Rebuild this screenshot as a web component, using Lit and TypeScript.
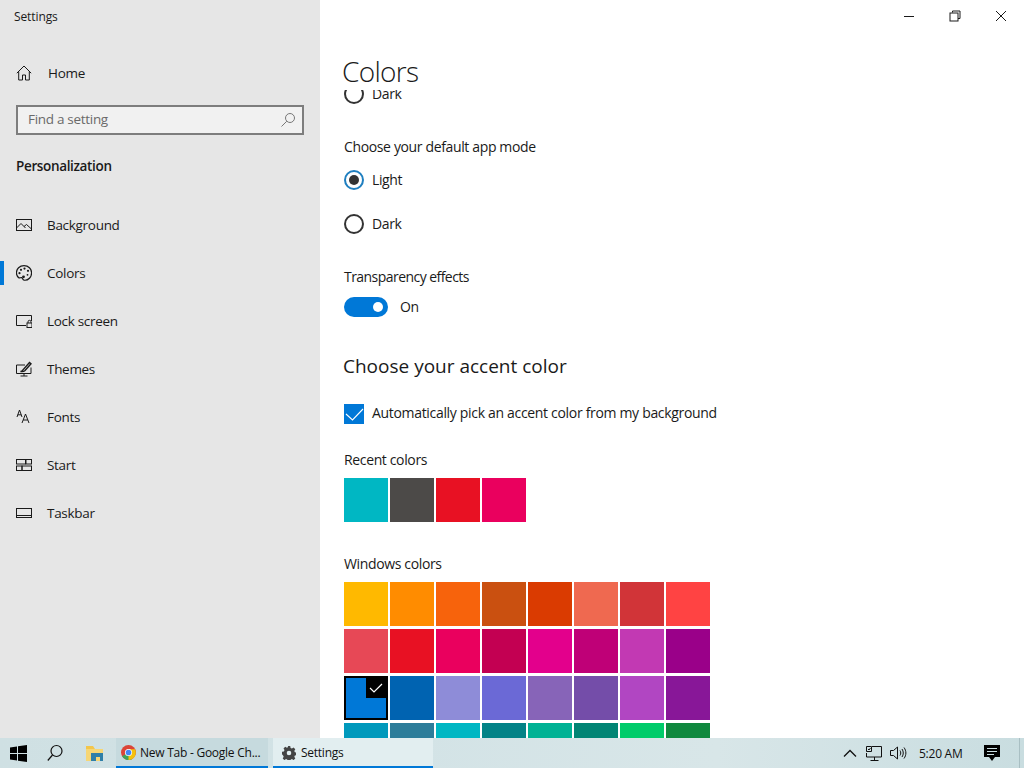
import { LitElement, html, css, svg } from "lit";
import { customElement } from "lit/decorators.js";

const navIcons: Record<string, unknown> = {
  background: svg`<rect x="0.5" y="2.5" width="15" height="11" /><path d="M0.5 11 5 6.500l4.500 4.500M8 9.500l2.500-2 5 4.500" />`,
  colors: svg`<path stroke-width="1.200" d="M8 .7C3.600.7.400 3.800.400 7.700c0 2 .8 3.800 2.300 5 .9.700 1.900-.4 3-.1 1.100.3.700 2.300 2.500 2.600 4.200.5 7.400-3.200 7.400-7.400C15.600 3.800 12.400.7 8 .7Z" /><circle cx="5" cy="4.800" r="1.100" class="f"/><circle cx="8.500" cy="3.600" r="1.100" class="f"/><circle cx="12" cy="5.800" r="1.100" class="f"/><circle cx="3.500" cy="8.200" r="1.100" class="f"/><circle cx="7.500" cy="11.800" r="1.400" class="f"/><circle cx="11.500" cy="9.800" r=".9" class="f"/>`,
  lock: svg`<path d="M10 12.500H.5v-10h15V8" /><rect x="11" y="10" width="5" height="4.500" /><path d="M12 10V8.800a1.500 1.500 0 0 1 3 0V10" />`,
  themes: svg`<path d="M15 6.500v6H.5V4H9M4.500 15h7M8 12.500V15" /><path stroke-width="1.400" d="M4.500 10.500c1.500-.2 2-.7 2.500-1.700L13.500 1.500 15 2.800 8.800 9.800c-1 .9-2.500 1-4.300.7Z" />`,
  fonts: svg`<path d="M1 8 3.500 1 6 8M1.800 5.800h3.400M6 14l3.500-9 3.500 9M7.200 11h4.600" />`,
  start: svg`<rect x="0.500" y="2.500" width="9" height="4.500" /><rect x="10" y="2.500" width="5.500" height="4.500" /><rect x="0.500" y="9" width="5.500" height="4.500" /><rect x="6" y="9" width="9.500" height="4.500" />`,
  taskbar: svg`<rect x="0.500" y="3.500" width="15" height="9" /><path d="M.5 10.500h15" />`,
};

const nav = [
  ["background", "Background"],
  ["colors", "Colors"],
  ["lock", "Lock screen"],
  ["themes", "Themes"],
  ["fonts", "Fonts"],
  ["start", "Start"],
  ["taskbar", "Taskbar"],
];

const recent = ["#00B7C3", "#4C4A48", "#E81123", "#EA005E"];
const windowsColors = [
  "#FFB900", "#FF8C00", "#F7630C", "#CA5010", "#DA3B01", "#EF6950", "#D13438", "#FF4343",
  "#E74856", "#E81123", "#EA005E", "#C30052", "#E3008C", "#BF0077", "#C239B3", "#9A0089",
  "#0078D7", "#0063B1", "#8E8CD8", "#6B69D6", "#8764B8", "#744DA9", "#B146C2", "#881798",
  "#0099BC", "#2D7D9A", "#00B7C3", "#038387", "#00B294", "#018574", "#00CC6A", "#10893E",
];

@customElement("app-root")
export class AppRoot extends LitElement {
  static styles = css`
    :host {
      display: block;
      width: 1024px;
      height: 768px;
      overflow: hidden;
      font-family: "Open Sans", "Noto Sans", sans-serif;
      font-size: 14px;
      letter-spacing: -0.36px;
      color: #1a1a1a;
      background: #fff;
    }
    .window { display: flex; height: 738px; }
    .side { width: 320px; flex: none; background: #e6e6e6; display: flex; flex-direction: column; font-size: 13.5px; letter-spacing: -0.3px; }
    .app-title { font-size: 12px; letter-spacing: -0.1px; line-height: 16px; padding: 9px 0 0 14px; height: 32px; box-sizing: border-box; }
    .row { display: flex; align-items: center; height: 48px; position: relative; }
    .home { margin-top: 17px; height: 48px; }
    .home span { margin-left: 1px; }
    .row .ic { width: 16px; height: 16px; margin-left: 16px; margin-right: 15px; flex: none; }
    .ic { fill: none; stroke: #1a1a1a; stroke-width: 1; }
    .ic .f { fill: #1a1a1a; stroke: none; }
    .search {
      margin: 8px 16px 0;
      height: 30px;
      box-sizing: border-box;
      border: 2px solid #7d7d7d;
      background: #f1f1f1;
      display: flex;
      align-items: center;
      justify-content: space-between;
      padding: 0 6px 0 10px;
      color: #6a6a6a;
    }
    .search span { padding-bottom: 3px; }
    .search svg { width: 16px; height: 16px; fill: none; stroke: #777; stroke-width: 1; }
    .section { margin: 20px 0 0 16px; font-weight: 600; line-height: 22px; height: 22px; letter-spacing: -0.35px; }
    .nav { margin-top: 24px; }
    .nav .row.on::before { content: ""; position: absolute; left: 0; top: 12px; width: 4px; height: 24px; background: #0078d7; }
    .main { flex: 1; min-width: 0; display: flex; flex-direction: column; }
    .titlebar { height: 32px; flex: none; display: flex; justify-content: flex-end; }
    .wb { width: 46px; height: 32px; display: flex; align-items: center; justify-content: center; }
    .wb svg { width: 12px; height: 12px; fill: none; stroke: #1a1a1a; stroke-width: 1; }
    h1 { margin: 0 0 0 22px; font-weight: 300; font-size: 28px; letter-spacing: -0.7px; line-height: 38px; height: 58px; padding-top: 20px; box-sizing: border-box; color: #1a1a1a; flex: none; }
    .scroll { flex: 1; min-height: 0; overflow: hidden; padding-left: 24px; }
    .line { line-height: 20px; height: 20px; display: flex; align-items: center; }
    .radio { width: 20px; height: 20px; border-radius: 50%; box-sizing: border-box; border: 2px solid #333; margin-right: 8px; flex: none; display: flex; align-items: center; justify-content: center; }
    .radio.on { border-color: #1f7fc0; }
    .radio.on::after { content: ""; width: 10px; height: 10px; border-radius: 50%; background: #333; }
    .first { margin-top: -6px; }
    .m33 { margin-top: 33px; }
    .m13 { margin-top: 13px; }
    .m24 { margin-top: 24px; }
    .m10 { margin-top: 10px; }
    .tight { letter-spacing: -0.55px; }
    .toggle { width: 44px; height: 20px; border-radius: 10px; background: #0078d7; margin-right: 12px; display: flex; align-items: center; justify-content: flex-end; padding-right: 5px; box-sizing: border-box; }
    .toggle::after { content: ""; width: 10px; height: 10px; border-radius: 50%; background: #fff; }
    h2 { margin: 35px 0 0 -1px; font-weight: 400; font-size: 19px; letter-spacing: 0; line-height: 28px; height: 28px; }
    .check { width: 20px; height: 20px; background: #0078d7; margin-right: 8px; flex: none; }
    .check svg { display: block; width: 20px; height: 20px; fill: none; stroke: #fff; stroke-width: 1.100; }
    .auto { padding-bottom: 2px; letter-spacing: -0.32px; }
    .m26 { margin-top: 26px; }
    .m32 { margin-top: 32px; }
    .swatches { margin-top: 8px; display: grid; grid-template-columns: repeat(8, 44px); column-gap: 2px; row-gap: 3px; }
    .sw { height: 44px; position: relative; box-sizing: border-box; }
    .sw.sel { border: 2px solid #000; }
    .sw.sel .mark { position: absolute; top: 0; right: 0; width: 20px; height: 20px; background: #000; }
    .mark svg { display: block; width: 20px; height: 20px; fill: none; stroke: #fff; stroke-width: 1.200; }
    .taskbar {
      height: 30px;
      display: flex;
      align-items: stretch;
      background: linear-gradient(90deg, #cfe0e3 0%, #d3e3e6 40%, #d8e6e8 70%, #c9dde0 100%);
      font-size: 12px;
      letter-spacing: -0.25px;
      color: #111;
    }
    .tb { display: flex; align-items: center; justify-content: center; flex: none; }
    .tb svg { display: block; }
    .w36 { width: 36px; }
    .w38 { width: 38px; }
    .w41 { width: 41px; }
    .tab { box-sizing: border-box; border-bottom: 2px solid #0078d7; display: flex; align-items: center; flex: none; padding-top: 1px; white-space: nowrap; }
    .tab.chrome { width: 152px; margin-left: 1px; padding-left: 5px; background: #c6dade; }
    .tab.settings { width: 160px; margin-left: 5px; padding-left: 9px; background: #e2eef0; }
    .tab svg { margin-right: 4px; flex: none; }
    .tab.settings svg { margin-right: 5px; }
    .tray { margin-left: auto; display: flex; align-items: center; }
    .tray svg { fill: none; stroke: #111; stroke-width: 1; display: block; flex: none; }
    .tray .net { margin-left: 9px; }
    .tray .vol { margin-left: 8px; }
    .tray .msg { margin-left: 17px; stroke: none; fill: #000; }
    .time { margin-left: 12px; width: 48px; white-space: nowrap; }
    .sep { width: 1px; align-self: stretch; background: #a9bfc3; margin-left: 19px; margin-right: 4px; }
  `;

  render() {
    return html`
      <div class="window">
        <aside class="side">
          <div class="app-title">Settings</div>
          <div class="row home">
            <svg class="ic" viewBox="0 0 16 16"><path d="M.8 8.200 8 1l7.200 7.200M2.700 6.500V15h3.800v-5h3v5h3.800V6.500" /></svg>
            <span>Home</span>
          </div>
          <div class="search">
            <span>Find a setting</span>
            <svg viewBox="0 0 16 16"><circle cx="10" cy="6" r="4.500" /><path d="M6.800 9.200 1.500 14.500" /></svg>
          </div>
          <div class="section">Personalization</div>
          <div class="nav">
            ${nav.map(
              ([k, label]) => html`<div class="row ${k === "colors" ? "on" : ""}">
                <svg class="ic" viewBox="0 0 16 16">${navIcons[k]}</svg>
                <span>${label}</span>
              </div>`
            )}
          </div>
        </aside>
        <main class="main">
          <div class="titlebar">
            <div class="wb"><svg viewBox="0 0 12 12"><path d="M1 6.500h10" /></svg></div>
            <div class="wb"><svg viewBox="0 0 12 12"><path d="M3.500 2.500V1h7.500v7.500H9" /><rect x="1" y="3" width="8" height="8" /></svg></div>
            <div class="wb"><svg viewBox="0 0 12 12"><path d="M1 1l10 10M11 1 1 11" /></svg></div>
          </div>
          <h1>Colors</h1>
          <div class="scroll">
            <div class="line first"><span class="radio"></span>Dark</div>
            <div class="line m33">Choose your default app mode</div>
            <div class="line m13"><span class="radio on"></span>Light</div>
            <div class="line m24"><span class="radio"></span>Dark</div>
            <div class="line m33 tight">Transparency effects</div>
            <div class="line m10"><span class="toggle"></span>On</div>
            <h2>Choose your accent color</h2>
            <div class="line m24">
              <span class="check"><svg viewBox="0 0 20 20"><path d="M2 10 8.500 16 19 5" /></svg></span>
              <span class="auto">Automatically pick an accent color from my background</span>
            </div>
            <div class="line m26">Recent colors</div>
            <div class="swatches">
              ${recent.map((c) => html`<div class="sw" style="background:${c}"></div>`)}
            </div>
            <div class="line m32">Windows colors</div>
            <div class="swatches">
              ${windowsColors.map((c, i) =>
                i === 16
                  ? html`<div class="sw sel" style="background:${c}"><span class="mark"><svg viewBox="0 0 20 20"><path d="M4 10 8 14 16 6" /></svg></span></div>`
                  : html`<div class="sw" style="background:${c}"></div>`
              )}
            </div>
          </div>
        </main>
      </div>
      <footer class="taskbar">
        <div class="tb w36">
          <svg width="17" height="17" viewBox="0 0 17 17" fill="#000"><path d="M0 2.400 7 1.400V8H0ZM8 1.200 17 0V8H8ZM0 9H7V15.600L0 14.600ZM8 9H17V17L8 15.800Z" /></svg>
        </div>
        <div class="tb w38">
          <svg width="16" height="18" viewBox="0 0 16 18" fill="none" stroke="#111" stroke-width="1.200"><circle cx="9.500" cy="7" r="5.500" /><path d="M5.500 11 .8 16.500" /></svg>
        </div>
        <div class="tb w41">
          <svg width="18" height="17" viewBox="0 0 18 17"><path d="M0 1h7l2 3H0Z" fill="#f3c64b" /><path d="M0 4h17v12H0Z" fill="#f6d675" /><path d="M5 8h12v8h-3v-4h-4v4H5Z" fill="#2f7fa8" /></svg>
        </div>
        <div class="tab chrome">
          <svg width="15" height="15" viewBox="0 0 16 16">
            <circle cx="8" cy="8" r="8" fill="#db4437" />
            <path d="M8 8 1.100 12A8 8 0 0 0 11.500 15.200Z" fill="#3da35a" />
            <path d="M8 4.500H15A8 8 0 0 1 8 16Z" fill="#f4c20d" />
            <circle cx="8" cy="8" r="3.800" fill="#fff" /><circle cx="8" cy="8" r="3" fill="#4285f4" />
          </svg>
          New Tab - Google Ch...
        </div>
        <div class="tab settings">
          <svg width="14" height="14" viewBox="0 0 14 14"><path fill="#444" fill-rule="evenodd" d="M5.800 0h2.400l.4 1.900 1.300.6 1.700-1 1.700 1.700-1 1.700.6 1.300 1.900.4v2.400l-1.900.4-.6 1.300 1 1.700-1.700 1.700-1.700-1-1.300.6-.4 1.900H5.800l-.4-1.900-1.300-.6-1.700 1-1.700-1.700 1-1.700-.6-1.300L0 8.200V5.800l1.900-.4.600-1.300-1-1.700 1.700-1.700 1.700 1 1.300-.6ZM7 4.700a2.300 2.300 0 1 0 0 4.600 2.300 2.300 0 0 0 0-4.600Z" /></svg>
          Settings
        </div>
        <div class="tray">
          <svg width="14" height="8" viewBox="0 0 14 8"><path d="M1 7.500 7 1.500l6 6" stroke-width="1.300" /></svg>
          <svg class="net" width="16" height="17" viewBox="0 0 16 17"><path d="M6 1.500h9.500v10.500H0.500V8M4.500 15.500h8M8.500 12v3.500M.5 1.500h5v5h-5zM2 4l1 1 1.500-2" /></svg>
          <svg class="vol" width="17" height="14" viewBox="0 0 17 14"><path d="M.5 4.500h3L7.500 1v12l-4-3.500h-3ZM10 4.500c1 1.500 1 3.500 0 5M12 3c1.700 2.500 1.700 5.500 0 8M14 1.500c2.500 3.500 2.500 7.500 0 11" /></svg>
          <span class="time">5:20 AM</span>
          <svg class="msg" width="16" height="17" viewBox="0 0 16 17"><path fill-rule="evenodd" d="M0 0h16v12h-5l-3 4-3-4H0ZM3 3v1h10V3Zm0 3v1h10V6Zm0 3v1h7V9Z" /></svg>
          <span class="sep"></span>
        </div>
      </footer>
    `;
  }
}
